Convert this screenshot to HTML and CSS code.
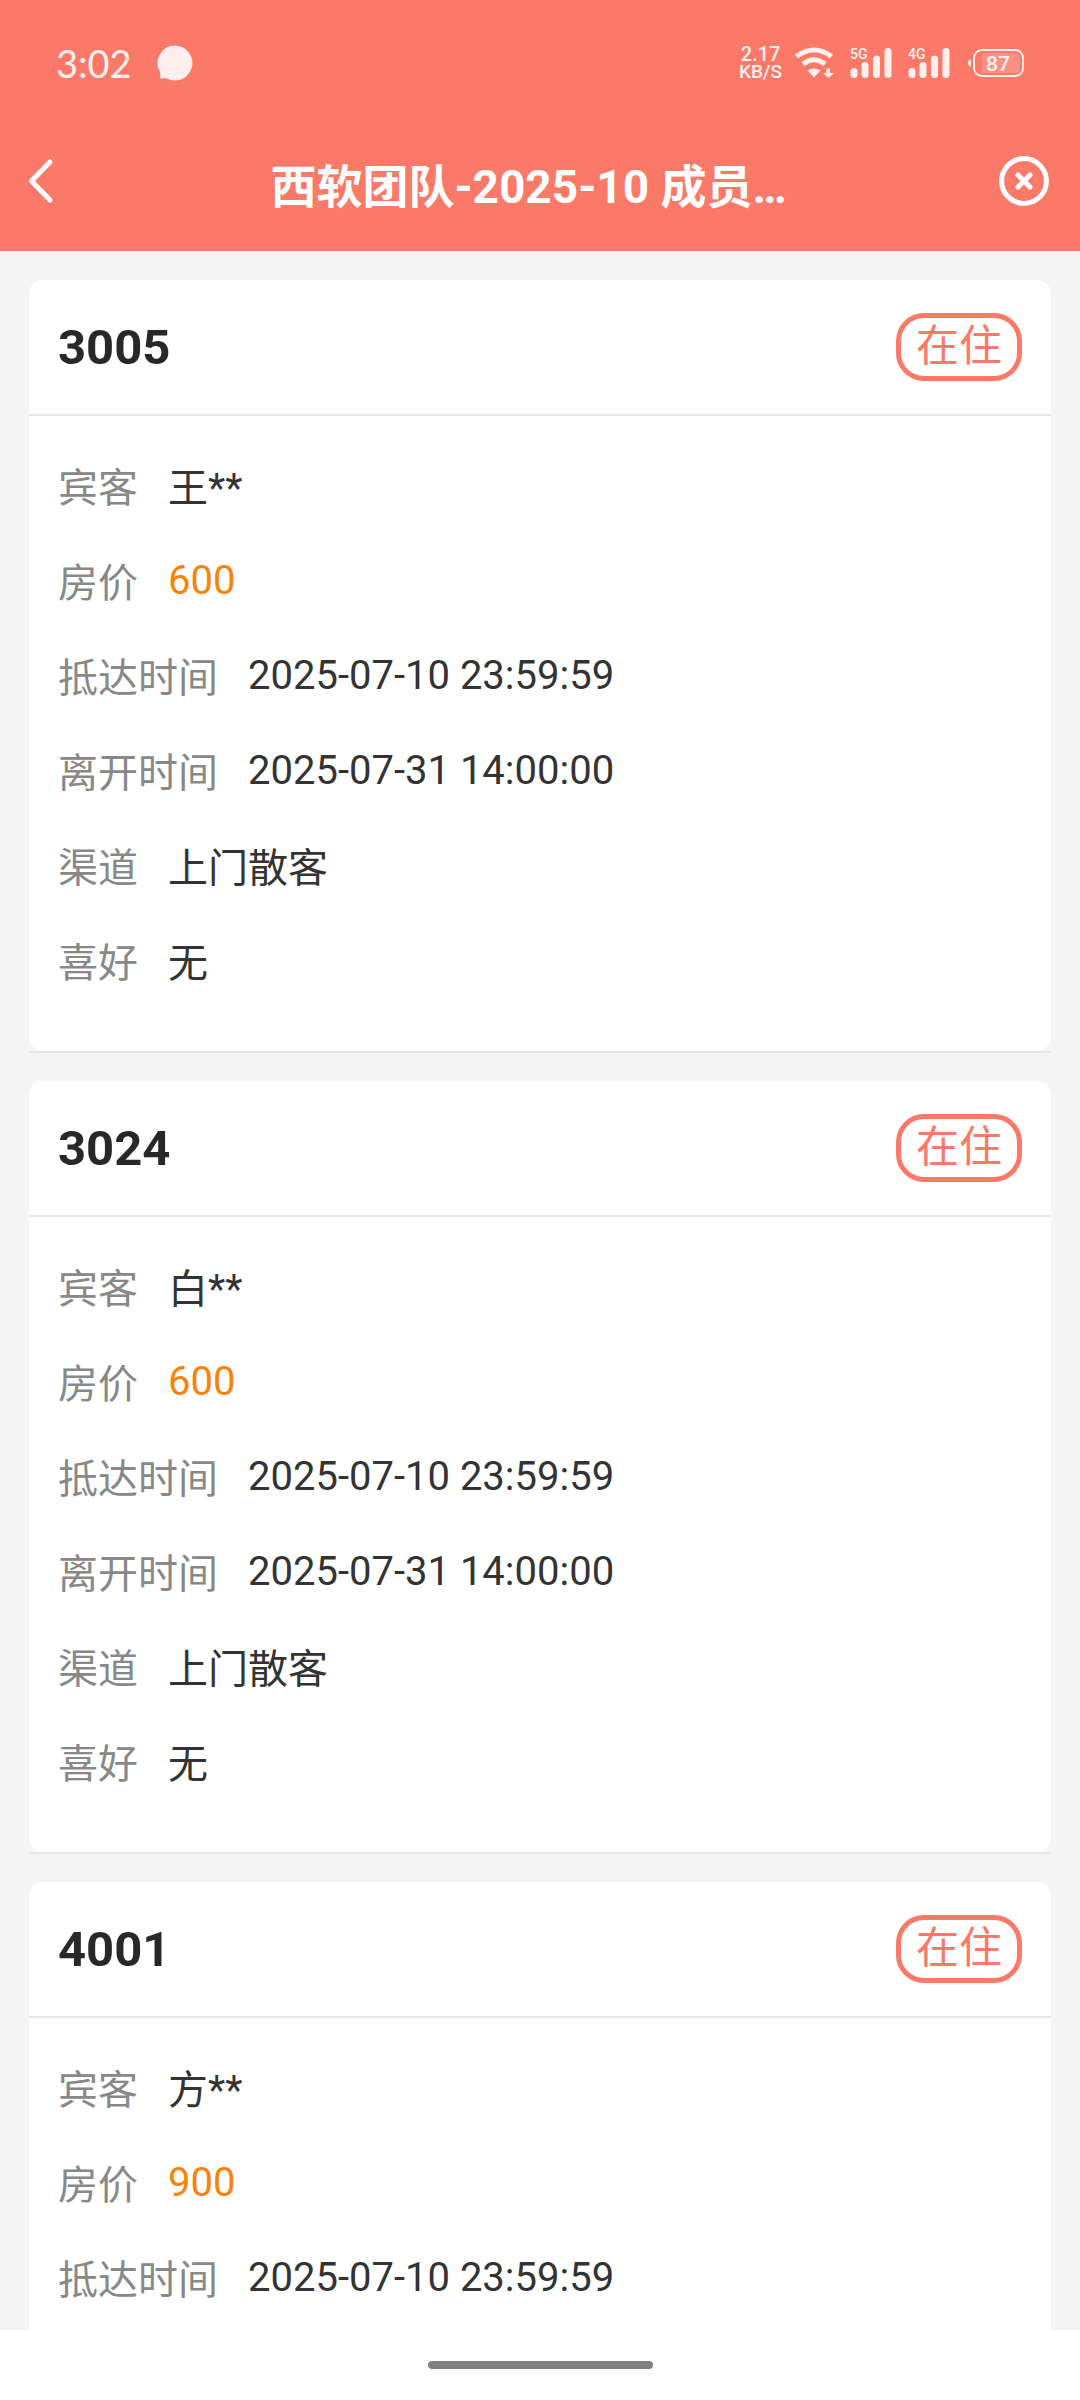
FILE: index.html
```html
<!DOCTYPE html>
<html lang="zh-CN">
<head>
<meta charset="utf-8">
<meta name="viewport" content="width=device-width, initial-scale=1">
<title>西软团队-2025-10 成员…</title>
<link rel="stylesheet" href="styles.css">
</head>
<body>
<div class="app">
  <header class="top">
    <div class="status">
      <span class="clock">3:02</span>
      <svg class="bubble" width="36" height="36" viewBox="0 0 36 36" aria-hidden="true"><path d="M18 0.5A17.5 17.5 0 1 1 10 33.6Q7 33 3 33.5Q3.8 30 3 27A17.5 17.5 0 0 1 18 0.5Z"/></svg>
      <div class="tray">
        <div class="speed"><span class="rate">2.17</span><span class="unit">KB/S</span></div>
        <svg class="wifi" width="40" height="32" viewBox="0 0 40 32" aria-hidden="true">
          <path class="line" d="M2.5 9.5Q20-3.500 37.500 9.500"/>
          <path class="line" d="M9 17Q20 8.500 31 17"/>
          <path d="M13.500 23.500Q20 19.500 26.500 23.500L20 30.500Z"/>
          <path d="M32.500 21.500h3.500v4.500h4l-5.500 5-5.500-5h3.500z"/>
        </svg>
        <svg class="signal" width="42" height="32" viewBox="0 0 42 32" aria-hidden="true">
          <text x="0" y="12">5G</text>
          <rect x="0.500" y="21" width="7" height="10" rx="3.500"/><rect x="11.500" y="15" width="7" height="16" rx="3.500"/><rect x="23" y="8.500" width="7" height="22.500" rx="3.500"/><rect x="34.500" y="1" width="7" height="30" rx="3.500"/>
        </svg>
        <svg class="signal" width="42" height="32" viewBox="0 0 42 32" aria-hidden="true">
          <text x="0" y="12">4G</text>
          <rect x="0.500" y="21" width="7" height="10" rx="3.500"/><rect x="11.500" y="15" width="7" height="16" rx="3.500"/><rect x="23" y="8.500" width="7" height="22.500" rx="3.500"/><rect x="34.500" y="1" width="7" height="30" rx="3.500"/>
        </svg>
        <svg class="battery" width="56" height="28" viewBox="0 0 56 28" aria-hidden="true">
          <path d="M3 10.500v7Q0 17 0 14T3 10.500Z"/>
          <rect class="shell" x="6" y="1" width="49" height="26" rx="8"/>
          <path class="level" d="M14 4h33q5 0 5 5v10q0 5-5 5H14Z"/>
          <text x="30" y="22" text-anchor="middle">87</text>
        </svg>
      </div>
    </div>
    <nav class="bar">
      <button class="icon-btn" type="button" aria-label="返回"><svg width="30" height="50" viewBox="0 0 30 50"><path d="M22 6L3.500 25 22 44"/></svg></button>
      <h1 class="title">西软团队-2025-10 成员…</h1>
      <button class="icon-btn" type="button" aria-label="关闭"><svg width="50" height="50" viewBox="0 0 50 50"><circle cx="25" cy="25" r="22.400"/><path d="M19 19L31 31M31 19L19 31"/></svg></button>
    </nav>
  </header>

  <main class="scroll">
    <ul class="rooms">
      <li class="room">
        <article class="card">
          <div class="head"><h2 class="number">3005</h2><span class="badge">在住</span></div>
          <dl class="info">
            <div class="row"><dt>宾客</dt><dd>王**</dd></div>
            <div class="row"><dt>房价</dt><dd class="price">600</dd></div>
            <div class="row"><dt>抵达时间</dt><dd>2025-07-10 23:59:59</dd></div>
            <div class="row"><dt>离开时间</dt><dd>2025-07-31 14:00:00</dd></div>
            <div class="row"><dt>渠道</dt><dd>上门散客</dd></div>
            <div class="row"><dt>喜好</dt><dd>无</dd></div>
          </dl>
        </article>
      </li>
      <li class="room">
        <article class="card">
          <div class="head"><h2 class="number">3024</h2><span class="badge">在住</span></div>
          <dl class="info">
            <div class="row"><dt>宾客</dt><dd>白**</dd></div>
            <div class="row"><dt>房价</dt><dd class="price">600</dd></div>
            <div class="row"><dt>抵达时间</dt><dd>2025-07-10 23:59:59</dd></div>
            <div class="row"><dt>离开时间</dt><dd>2025-07-31 14:00:00</dd></div>
            <div class="row"><dt>渠道</dt><dd>上门散客</dd></div>
            <div class="row"><dt>喜好</dt><dd>无</dd></div>
          </dl>
        </article>
      </li>
      <li class="room">
        <article class="card">
          <div class="head"><h2 class="number">4001</h2><span class="badge">在住</span></div>
          <dl class="info">
            <div class="row"><dt>宾客</dt><dd>方**</dd></div>
            <div class="row"><dt>房价</dt><dd class="price">900</dd></div>
            <div class="row"><dt>抵达时间</dt><dd>2025-07-10 23:59:59</dd></div>
          </dl>
        </article>
      </li>
    </ul>
  </main>

  <footer class="home"><span class="pill"></span></footer>
</div>
</body>
</html>
```
FILE: styles.css
```css
* {
  box-sizing: border-box;
}

body {
  margin: 0;
  background: #f4f4f4;
  color: #333;
  font-family: Roboto, "Noto Sans CJK SC", sans-serif;
  font-size: 40px;
}

h1, h2, ul, dl, dd {
  margin: 0;
  padding: 0;
}

.app {
  display: flex;
  flex-direction: column;
  height: 100vh;
}

/* Header */
.top {
  flex: none;
  background: #fb7968;
  color: #fff;
}

.status {
  display: flex;
  align-items: center;
  height: 126px;
  padding: 0 56px;
  color: #fff0ee;
  fill: #fff0ee;
}

.clock {
  font-family: Lato, sans-serif;
  font-size: 38px;
  line-height: 48px;
}

.bubble {
  margin-left: 25px;
}

.tray {
  display: flex;
  align-items: center;
  gap: 16px;
  margin-left: auto;
}

.speed {
  display: flex;
  flex-direction: column;
  align-items: center;
  margin-right: -4px;
  font-weight: 500;
}

.rate {
  font-size: 20px;
  line-height: 17px;
}

.unit {
  font-size: 19px;
  line-height: 17px;
}

.wifi .line {
  fill: none;
  stroke: #fff0ee;
  stroke-width: 5;
}

.signal {
  overflow: visible;
}

.signal text {
  font-size: 14px;
  font-weight: 500;
}

.battery {
  margin-left: 2px;
}

.battery .shell {
  fill: none;
  stroke: #fff0ee;
  stroke-width: 2;
}

.battery .level {
  opacity: 0.2;
}

.battery text {
  font-size: 21px;
  font-weight: 500;
}

.bar {
  display: grid;
  grid-template-columns: auto 1fr auto;
  align-items: center;
  height: 125px;
  padding: 0 31px 16px 28px;
}

.icon-btn {
  display: flex;
  padding: 0;
  border: 0;
  background: none;
  cursor: pointer;
}

.icon-btn svg {
  fill: none;
  stroke: #fff;
  stroke-width: 5;
  stroke-linecap: round;
  stroke-linejoin: round;
}

.title {
  padding-top: 4px;
  overflow: hidden;
  font-size: 46px;
  font-weight: 700;
  text-align: center;
  text-overflow: ellipsis;
  white-space: nowrap;
}

/* Room list */
.scroll {
  flex: 1;
  min-height: 0;
  overflow: hidden auto;
  scrollbar-width: none;
}

.rooms {
  display: flex;
  flex-direction: column;
  gap: 28px;
  padding: 29px;
  list-style: none;
}

.room {
  border-bottom: 2px solid #e6e6e6;
}

.card {
  border-radius: 14px;
  background: #fff;
}

.head {
  display: flex;
  align-items: center;
  justify-content: space-between;
  height: 136px;
  padding: 0 29px;
  border-bottom: 2px solid #e6e6e6;
}

.number {
  color: #282828;
  font-size: 49px;
  font-weight: 700;
}

.badge {
  padding: 0 15px 2px;
  border: 5px solid #fb7968;
  border-radius: 28px;
  color: #fb7968;
  font-size: 43px;
  line-height: 56px;
}

.info {
  display: flex;
  flex-direction: column;
  gap: 37px;
  padding: 40px 29px 62px;
}

.row {
  display: flex;
  align-items: center;
  gap: 30px;
}

.row dt {
  color: #888;
}

.price {
  color: #fa8209;
}

/* Gesture area */
.home {
  display: flex;
  flex: none;
  align-items: center;
  justify-content: center;
  height: 70px;
  background: #fff;
}

.pill {
  width: 225px;
  height: 8px;
  border-radius: 4px;
  background: #808080;
}
```
